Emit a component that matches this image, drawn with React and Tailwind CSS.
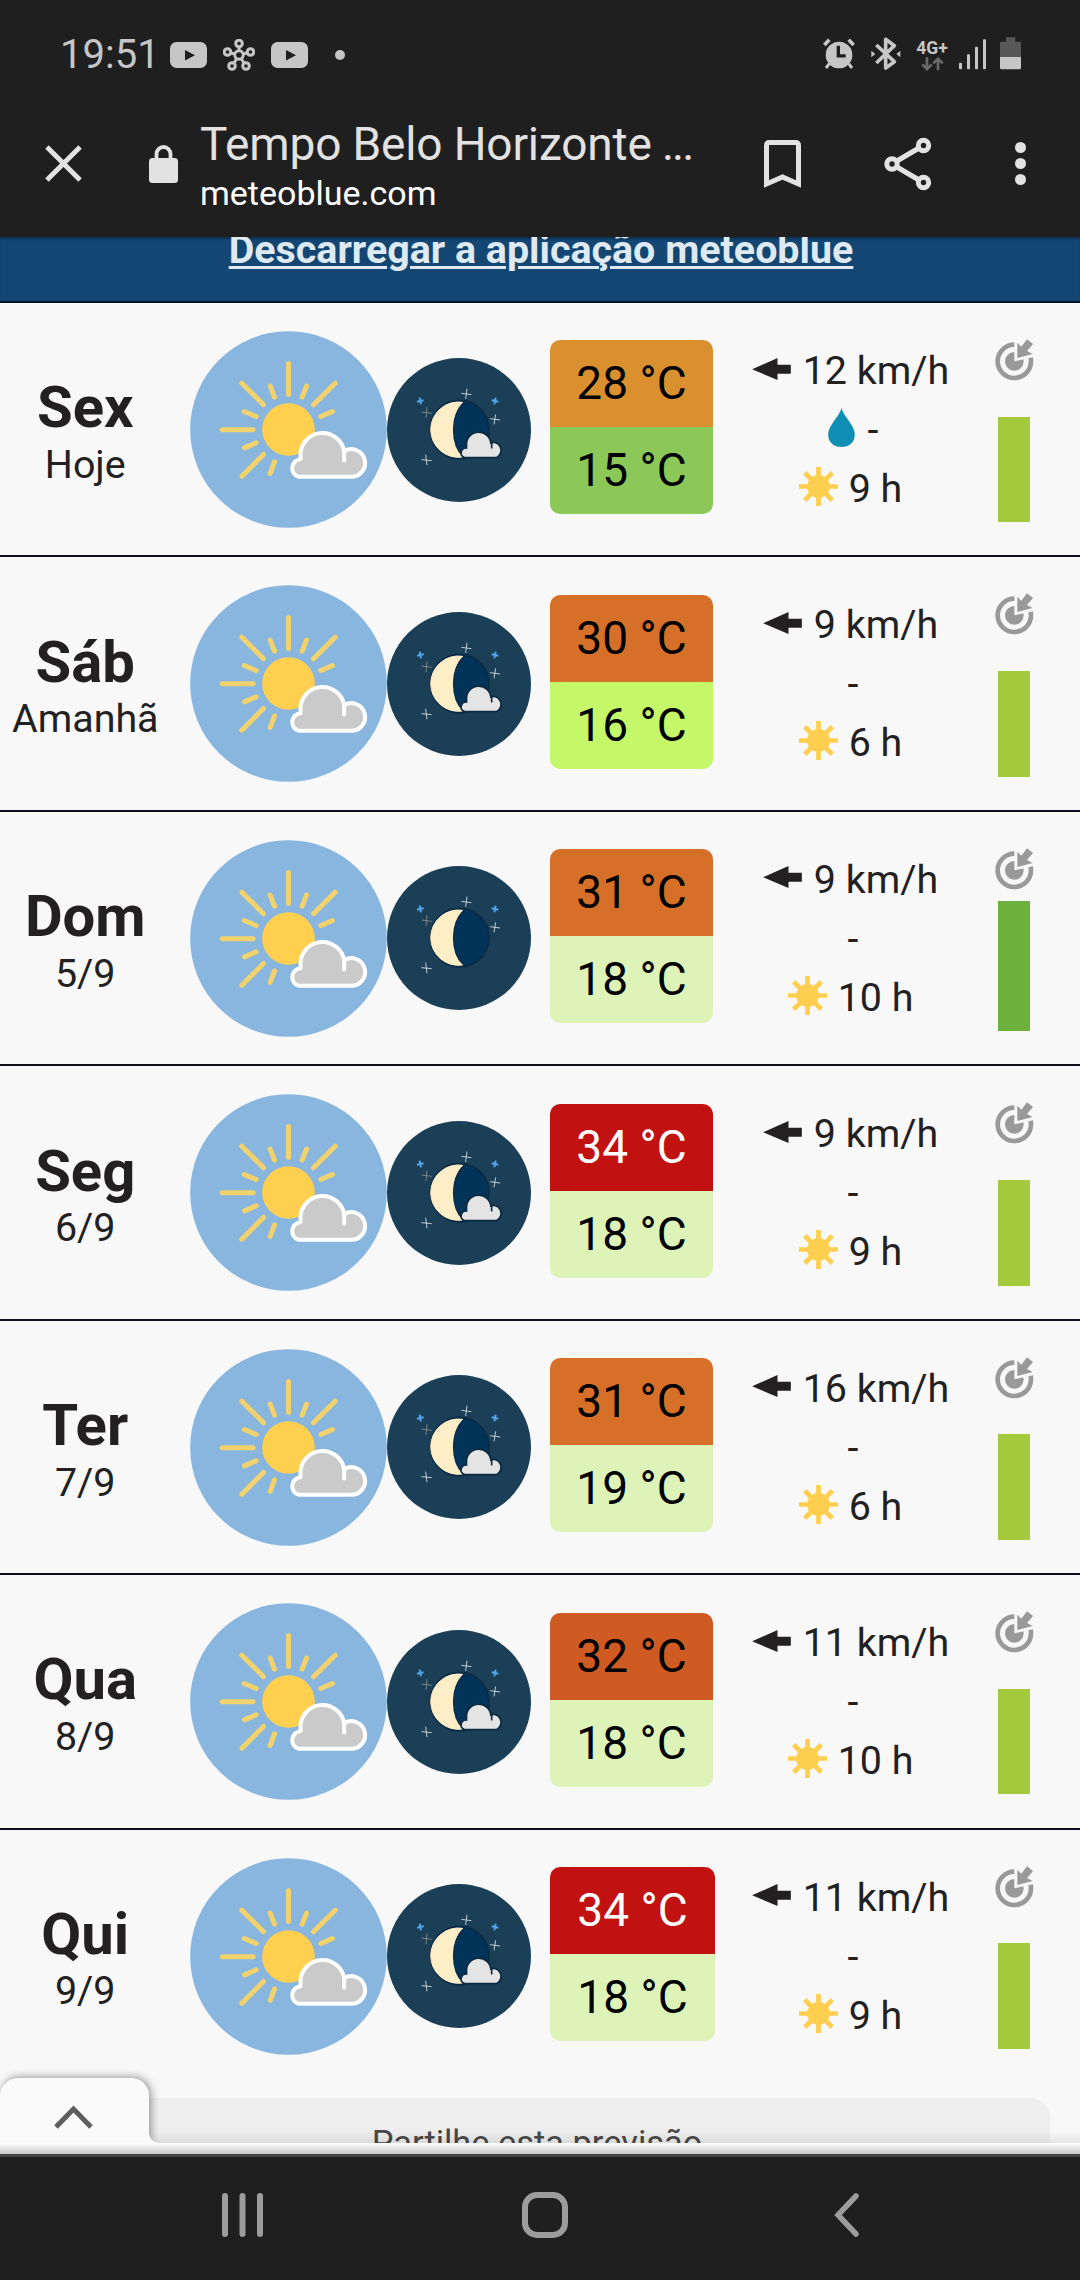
import React from "react";
import clsx from "clsx";

const days = [
  { name: "Sex", date: "Hoje", max: 28, min: 15, maxBg: "bg-[#db902f]", minBg: "bg-[#8bc858]", wind: 12, rain: true, sun: 9, cloudyNight: true },
  { name: "Sáb", date: "Amanhã", max: 30, min: 16, maxBg: "bg-[#d66f28]", minBg: "bg-[#c4f868]", wind: 9, sun: 6, cloudyNight: true },
  { name: "Dom", date: "5/9", max: 31, min: 18, maxBg: "bg-[#d66f28]", minBg: "bg-[#ddf3b8]", wind: 9, sun: 10, good: true },
  { name: "Seg", date: "6/9", max: 34, min: 18, maxBg: "bg-[#c21111]", minBg: "bg-[#ddf3b8]", hot: true, wind: 9, sun: 9, cloudyNight: true },
  { name: "Ter", date: "7/9", max: 31, min: 19, maxBg: "bg-[#d66f28]", minBg: "bg-[#ddf3b8]", wind: 16, sun: 6, cloudyNight: true },
  { name: "Qua", date: "8/9", max: 32, min: 18, maxBg: "bg-[#cf5a22]", minBg: "bg-[#ddf3b8]", wind: 11, sun: 10, cloudyNight: true },
  { name: "Qui", date: "9/9", max: 34, min: 18, maxBg: "bg-[#c21111]", minBg: "bg-[#ddf3b8]", hot: true, wide: true, wind: 11, sun: 9, cloudyNight: true },
];

function DayIcon() {
  return (
    <svg className="size-[197px] shrink-0" viewBox="15.5 17.5 591 591" fill="none">
      <circle cx="311" cy="313" r="295" fill="#89b6df" />
      <g stroke="#f2d26c" strokeWidth="15" strokeLinecap="round">
        <path d="M311 115V208M171 174L236 239M451 174L386 239M112 314H205M171 453L236 388" />
        <path d="M256 183L269 216M365 183L352 216M178 259L214 274M443 259L408 274M179 368L214 353M256 445L269 410" />
      </g>
      <circle cx="311" cy="313" r="79" fill="#ffd04f" />
      <g stroke="#fff" strokeWidth="12" strokeLinecap="round" strokeLinejoin="round">
        <path
          d="M342 455A27 27 0 0 1 347 402V387A66 66 0 0 1 478 378A41.500 41.500 0 1 1 497 455Z"
          fill="#cacaca"
        />
        <path d="M478 376V406" />
      </g>
    </svg>
  );
}

function NightIcon({ cloudy }) {
  return (
    <svg className="size-[144px] shrink-0" viewBox="21 52 432 432" fill="none">
      <circle cx="237" cy="268" r="216" fill="#1a3f56" />
      <circle cx="239" cy="267" r="88" fill="#023358" stroke="#0c2b43" strokeWidth="5" />
      <path
        d="M248 185C209 220 209 312 248 349A83 83 0 1 1 248 185Z"
        fill="#feeec8"
        stroke="#feeec8"
        strokeWidth="3"
        strokeLinejoin="round"
      />
      <path d="M252 188C211 222 211 312 250 347" stroke="#0c2b43" strokeWidth="4" />
      <g stroke="#55a5ee" strokeWidth="6">
        <path d="M119 171L123 191M111 183L131 179" />
        <path d="M347 171L343 191M335 179L355 183" />
      </g>
      <path d="M141 200L138 232M125 214L155 218" stroke="#8d9092" strokeWidth="2.500" />
      <g stroke="#dfe6ea" strokeWidth="2.500">
        <path d="M261 144L257 175M244 158L274 162" />
        <path d="M347 221L342 251M330 234L360 238" />
        <path d="M137 342L141 374M124 357L155 360" />
      </g>
      {cloudy && (
        <g strokeLinejoin="round" strokeLinecap="round">
          <path
            d="M254 348A12 12 0 0 1 262 325V312A34 34 0 0 1 330 310A21 21 0 1 1 349 348Z"
            fill="#e4e4e4"
            stroke="#0c2b43"
            strokeWidth="11"
            paintOrder="stroke"
          />
          <path d="M335 308V321" stroke="#0c2b43" strokeWidth="5" />
        </g>
      )}
    </svg>
  );
}

function WindArrow() {
  return (
    <svg className="relative -top-[2px] h-[22px] w-[39px]" viewBox="0 0 116 66">
      <path d="M0 34L76 0V20H116V47H76V66Z" fill="#222021" />
    </svg>
  );
}

function Drop() {
  return (
    <svg className="relative -top-[2px] h-[39px] w-[27px]" viewBox="0 0 80 117">
      <path d="M40 0C45 24 80 52 80 79C80 105 62 117 40 117C18 117 0 105 0 79C0 52 35 24 40 0Z" fill="#0f8fb4" />
    </svg>
  );
}

function SunIcon() {
  return (
    <svg className="relative -top-[2px] size-[39px]" viewBox="0 0 116 116">
      <circle cx="58" cy="58" r="34" fill="#fecf4f" />
      <path d="M58 0V116M0 58H116M17 17L99 99M99 17L17 99" stroke="#fecf4f" strokeWidth="14" />
    </svg>
  );
}

function TargetIcon() {
  return (
    <svg className="h-[42px] w-[39px]" viewBox="767 26 117 126" fill="none">
      <circle cx="825" cy="93" r="50" stroke="#999" strokeWidth="14" />
      <circle cx="825" cy="93" r="28" fill="#999" />
      <path d="M825 93V26H900V76Z" fill="#f8f8f8" />
      <path d="M834 83V37L846 49L863 27L881 41L863 62L880 71Z" fill="#999" />
    </svg>
  );
}

function DayRow({ day, last }) {
  return (
    <div className={clsx("flex h-[254.45px] shrink-0 items-start", !last && "border-b-2 border-[#10101c]")}>
      <div className="w-[170.5px] pt-[75.3px] text-center text-[#222021]">
        <div className="text-[58px] leading-[58px] font-bold">{day.name}</div>
        <div className="mt-[8.5px] text-[39.4px] leading-10">{day.date}</div>
      </div>
      <div className="ml-[19.5px] flex items-center pt-7">
        <DayIcon />
        <NightIcon cloudy={day.cloudyNight} />
      </div>
      <div
        className={clsx(
          "mt-[37.4px] ml-[19px] overflow-hidden rounded-[10px] text-center text-[46px] leading-[87px] text-black",
          day.wide ? "-mr-[2px] w-[165px]" : "w-[163px]"
        )}
      >
        <div className={clsx(day.maxBg, day.hot && "text-white")}>{day.max} °C</div>
        <div className={day.minBg}>{day.min} °C</div>
      </div>
      <div className="w-[277px] pt-[38px] text-[39.4px] leading-[59px] text-[#222021]">
        <div className="flex items-center justify-center gap-3 pr-[2px]">
          <WindArrow />
          {day.wind} km/h
        </div>
        <div className="flex items-center justify-center gap-[13px] pl-[3px]">
          {day.rain && <Drop />}-
        </div>
        <div className="flex items-center justify-center gap-[11px] pr-[2px]">
          <SunIcon />
          {day.sun} h
        </div>
      </div>
      <div className="ml-[5px] flex h-[219.2px] w-[39px] flex-col items-start justify-between pt-9">
        <TargetIcon />
        <div className={clsx("ml-[3px] w-8", day.good ? "h-[130px] bg-[#6bb13c]" : "h-[105.5px] bg-[#a4c93c]")}></div>
      </div>
    </div>
  );
}

function VideoIcon() {
  return (
    <svg className="h-[26px] w-[37px]" viewBox="0 0 37 26">
      <rect width="37" height="26" rx="6.500" fill="#c6c6c6" />
      <path d="M15 8L25 13.200L15 18.500Z" fill="#1f1f1f" />
    </svg>
  );
}

function StatusBar() {
  return (
    <div className="flex h-[106px] items-center justify-between pt-1 pr-[59px] pl-[60px]">
      <div className="flex items-center">
        <span className="w-[110px] text-[40px] leading-none text-[#c6c6c6]">19:51</span>
        <VideoIcon />
        <svg className="mx-4 size-8" viewBox="223 38.500 32 32" fill="none" stroke="#c6c6c6" strokeWidth="3">
          <circle cx="239" cy="54.500" r="4.300" />
          <circle cx="239" cy="43" r="3.300" />
          <circle cx="227.500" cy="51.500" r="3.300" />
          <circle cx="250.500" cy="51.500" r="3.300" />
          <circle cx="232" cy="65.500" r="3.300" />
          <circle cx="246" cy="65.500" r="3.300" />
          <path d="M239 46.500V50M231 52.500L235 53.500M247 52.500L243 53.500M234 62.500L236.500 58.500M244 62.500L241.500 58.500" />
        </svg>
        <VideoIcon />
        <span className="ml-[27px] size-[10px] rounded-full bg-[#c6c6c6]"></span>
      </div>
      <div className="-mt-1 flex h-9 items-center">
        <svg className="h-9 w-[34px]" viewBox="36 30 102 108" fill="none">
          <circle cx="87" cy="90" r="40" fill="#c6c6c6" />
          <path d="M43 60L58 44M116 44L131 60" stroke="#c6c6c6" strokeWidth="11" />
          <path d="M58 116L48 129M116 116L126 129" stroke="#c6c6c6" strokeWidth="9" />
          <path d="M85 62V92.500H107" stroke="#1f1f1f" strokeWidth="10" />
        </svg>
        <svg className="ml-[15px] h-9 w-[30px]" viewBox="182 30 90 108" fill="none">
          <path d="M198 60L252 110L226 129V43L252 62L198 114" stroke="#c6c6c6" strokeWidth="11" strokeLinejoin="round" />
          <path d="M183 77L195 87L183 97ZM270 77L258 87L270 97Z" fill="#c6c6c6" />
        </svg>
        <div className="ml-[15px] flex w-[32px] flex-col items-center">
          <span className="mt-[3px] text-[17.5px] leading-[18px] font-bold text-[#c6c6c6]">4G+</span>
          <svg className="h-[14px] w-[23px]" viewBox="333 97 69 42" fill="none" stroke="#6a6a6a" strokeWidth="8">
            <path d="M351 98V132M337 119L351 133L365 119M384 137V103M370 116L384 102L398 116" />
          </svg>
        </div>
        <svg className="ml-[11px] h-9 w-[27px]" viewBox="447 30 81 108" fill="#c6c6c6">
          <rect x="447" y="113" width="9" height="20" rx="3" />
          <rect x="471" y="88" width="9" height="45" rx="3" />
          <rect x="495" y="65" width="9" height="68" rx="3" />
          <rect x="519" y="43" width="9" height="90" rx="3" />
        </svg>
        <svg className="ml-[14px] h-9 w-[21px]" viewBox="570 30 63 108">
          <path d="M588 37H616V50H629Q633 50 633 54V96H570V54Q570 50 574 50H588Z" fill="#585858" />
          <path d="M570 96H633V129Q633 133 629 133H574Q570 133 570 129Z" fill="#c6c6c6" />
        </svg>
      </div>
    </div>
  );
}

function Toolbar() {
  return (
    <div className="flex h-[131px] items-center pb-4 pl-[45px] text-[#e2e2e2]">
      <svg className="size-[37px]" viewBox="0 0 38 38" stroke="currentColor" strokeWidth="5">
        <path d="M2 2L36 36M36 2L2 36" />
      </svg>
      <svg className="ml-[67px] h-[38px] w-[29px]" viewBox="0 0 29 38" fill="none">
        <rect y="13" width="29" height="25" rx="3.500" fill="currentColor" />
        <path d="M7.500 14V9A7 7 0 0 1 21.500 9V14" stroke="currentColor" strokeWidth="3.800" />
      </svg>
      <div className="mt-[4px] ml-[22px] w-[564px]">
        <div className="text-[46px] leading-[54px] tracking-[-0.15px] whitespace-nowrap">
          Tempo Belo Horizonte <span className="-ml-px -tracking-[2px]">...</span>
        </div>
        <div className="text-[34px] leading-[44px] text-white">meteoblue.com</div>
      </div>
      <svg className="h-12 w-[37px]" viewBox="0 0 37 48" fill="none" stroke="currentColor" strokeWidth="5">
        <path d="M2.500 44V5.500Q2.500 2.500 5.500 2.500H31.500Q34.500 2.500 34.500 5.500V44L18.500 37Z" />
      </svg>
      <svg className="ml-[83px] h-[54px] w-12" viewBox="0 0 48 54" fill="none" stroke="currentColor" strokeWidth="5">
        <path d="M12 24.500L35 11M12 29.500L35 43" />
        <circle cx="8" cy="27" r="5.200" />
        <circle cx="39.500" cy="8.500" r="5.200" />
        <circle cx="39.500" cy="45.500" r="5.200" />
      </svg>
      <div className="ml-[83px] flex flex-col gap-[5px]">
        <span className="size-[11px] rounded-full bg-current"></span>
        <span className="size-[11px] rounded-full bg-current"></span>
        <span className="size-[11px] rounded-full bg-current"></span>
      </div>
    </div>
  );
}

function NavBar() {
  return (
    <div className="flex h-[123px] items-center bg-[#1f1f1f] pb-[7px] pl-[222px]">
      <svg className="h-11 w-[41px]" viewBox="0 0 41 44" stroke="#9c9c9c" strokeWidth="6" strokeLinecap="round">
        <path d="M3 3V41M20.500 3V41M38 3V41" />
      </svg>
      <div className="ml-[259px] size-[46px] rounded-[15px] border-[6px] border-[#9c9c9c]"></div>
      <svg
        className="ml-[266px] h-11 w-[26px]"
        viewBox="0 0 26 44"
        fill="none"
        stroke="#9c9c9c"
        strokeWidth="5.500"
        strokeLinecap="round"
      >
        <path d="M22 3L4 22L22 41" />
      </svg>
    </div>
  );
}

export default function App() {
  return (
    <div className="flex h-[2280px] w-[1080px] flex-col overflow-hidden bg-[#f8f8f8] font-[Roboto,sans-serif]">
      <header className="h-[237px] shrink-0 bg-[#1f1f1f]">
        <StatusBar />
        <Toolbar />
      </header>
      <div className="h-[66px] shrink-0 overflow-hidden border-b-2 border-[#001428] bg-[#134672] text-center shadow-[inset_0_3px_2px_-1px_rgba(0,0,0,0.3)]">
        <a className="-mt-[7px] block pl-[2px] text-[39.4px] leading-10 font-bold text-[#dfe9f2] underline decoration-[3px] underline-offset-[3px]">
          Descarregar a aplicação meteoblue
        </a>
      </div>
      <main className="relative h-[1840px] shrink-0 overflow-hidden">
        {days.map((day, i) => (
          <DayRow key={day.name} day={day} last={i === days.length - 1} />
        ))}
        <div className="mx-[30px] mt-[14px] h-[90px] rounded-[20px] bg-[#eee] pt-[25px] pr-[6px] text-center text-[34.4px] leading-10 text-[#484848]">
          Partilhe esta previsão
        </div>
        <div className="absolute inset-x-0 bottom-0 h-3 bg-gradient-to-t from-black/8 to-transparent"></div>
        <div className="absolute bottom-0 left-0 flex h-[66px] w-[149px] items-center justify-center rounded-t-[18px] border-t border-[#c0c0c0] bg-[#fafafa] shadow-[2px_0_8px_rgba(0,0,0,0.4)]">
          <svg className="mt-3 mr-[2px] h-6 w-[39px]" viewBox="0 0 39 24" fill="none" stroke="#5e5e5e" strokeWidth="5">
            <path d="M2 22L19.500 4L37 22" />
          </svg>
        </div>
        <svg className="absolute bottom-0 left-[149px] size-[10px]" viewBox="0 0 10 10">
          <path d="M0 0Q1 9 10 10H0Z" fill="#fafafa" />
        </svg>
      </main>
      <div className="h-[14px] shrink-0 border-b-[3px] border-[#444] bg-gradient-to-b from-white to-[#cacaca]"></div>
      <NavBar />
    </div>
  );
}
